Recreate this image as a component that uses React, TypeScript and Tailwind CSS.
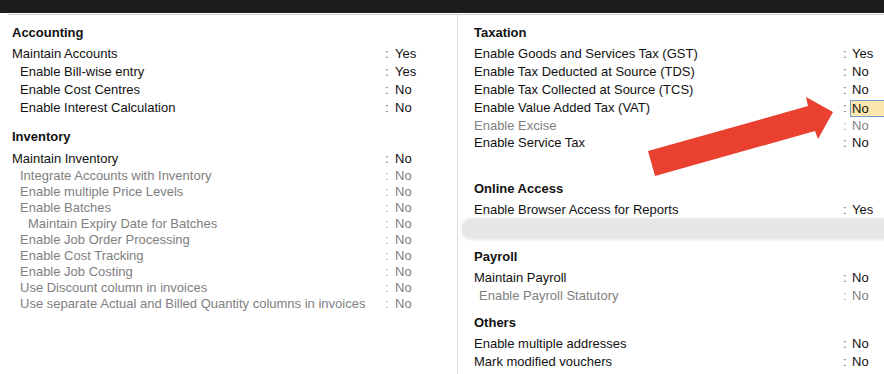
import React from "react";

type Row = { label: string; value: string; grey?: boolean; indent?: number; h?: number; hl?: boolean };

const leftAccounting: Row[] = [
  { label: "Maintain Accounts", value: "Yes" },
  { label: "Enable Bill-wise entry", value: "Yes", indent: 1 },
  { label: "Enable Cost Centres", value: "No", indent: 1 },
  { label: "Enable Interest Calculation", value: "No", indent: 1 },
];

const leftInventory: Row[] = [
  { label: "Maintain Inventory", value: "No", h: 17 },
  { label: "Integrate Accounts with Inventory", value: "No", grey: true, indent: 1, h: 16 },
  { label: "Enable multiple Price Levels", value: "No", grey: true, indent: 1, h: 16 },
  { label: "Enable Batches", value: "No", grey: true, indent: 1, h: 16 },
  { label: "Maintain Expiry Date for Batches", value: "No", grey: true, indent: 2, h: 16 },
  { label: "Enable Job Order Processing", value: "No", grey: true, indent: 1, h: 16 },
  { label: "Enable Cost Tracking", value: "No", grey: true, indent: 1, h: 16 },
  { label: "Enable Job Costing", value: "No", grey: true, indent: 1, h: 16 },
  { label: "Use Discount column in invoices", value: "No", grey: true, indent: 1, h: 16 },
  { label: "Use separate Actual and Billed Quantity columns in invoices", value: "No", grey: true, indent: 1, h: 16 },
];

const taxation: Row[] = [
  { label: "Enable Goods and Services Tax (GST)", value: "Yes" },
  { label: "Enable Tax Deducted at Source (TDS)", value: "No" },
  { label: "Enable Tax Collected at Source (TCS)", value: "No" },
  { label: "Enable Value Added Tax (VAT)", value: "No", hl: true },
  { label: "Enable Excise", value: "No", grey: true, h: 17 },
  { label: "Enable Service Tax", value: "No", h: 17 },
];

function Heading({ children, className = "" }: { children: React.ReactNode; className?: string }) {
  return <div className={"h-[18px] leading-[18px] font-bold text-[#111] " + className}>{children}</div>;
}

function LeftRow({ r }: { r: Row }) {
  const pad = r.indent === 2 ? "pl-[16px]" : r.indent === 1 ? "pl-[8px]" : "";
  const col = r.grey ? "text-[#808080]" : "text-[#111]";
  return (
    <div
      className={"grid grid-cols-[373px_10px_1fr] items-center " + col}
      style={{ height: (r.h ?? 18) + "px" }}
    >
      <div className={"whitespace-nowrap " + pad}>{r.label}</div>
      <div className={r.grey ? "text-[#aaa]" : "text-[#666]"}>:</div>
      <div>{r.value}</div>
    </div>
  );
}

function RightRow({ r }: { r: Row }) {
  const pad = r.indent === 1 ? "pl-[5px]" : "";
  const col = r.grey ? "text-[#808080]" : "text-[#111]";
  return (
    <div
      className={"grid grid-cols-[369px_9px_1fr] items-center " + col}
      style={{ height: (r.h ?? 18) + "px" }}
    >
      <div className={"whitespace-nowrap " + pad}>{r.label}</div>
      <div className={r.grey ? "text-[#aaa]" : "text-[#666]"}>:</div>
      {r.hl ? (
        <div className="ml-[-2px] mr-[-2px] h-[17px] border border-[#6f9fcb] bg-[#fde7ae] pl-[1px] leading-[15px]">
          {r.value}
        </div>
      ) : (
        <div>{r.value}</div>
      )}
    </div>
  );
}

export default function App() {
  return (
    <div
      className="relative h-[374px] w-[884px] overflow-hidden bg-white text-[13px] leading-[18px]"
      style={{ fontFamily: '"Liberation Sans", Arial, sans-serif' }}
    >
      <div className="h-[13px] bg-[#1d1d1d]" />
      <div className="ml-[8px] mt-[1px] flex h-[360px] border-t border-[#cfcfcf]">
        {/* Left column */}
        <div className="w-[450px] shrink-0 border-r border-[#d9d9d9] pl-[4px] pt-[9px]">
          <Heading>Accounting</Heading>
          <div className="mt-[3px]">
            {leftAccounting.map((r) => (
              <LeftRow key={r.label} r={r} />
            ))}
          </div>
          <Heading className="mt-[11px]">Inventory</Heading>
          <div className="mt-[4px]">
            {leftInventory.map((r) => (
              <LeftRow key={r.label} r={r} />
            ))}
          </div>
        </div>

        {/* Right column */}
        <div className="flex-1 pl-[16px] pt-[9px]">
          <Heading>Taxation</Heading>
          <div className="mt-[3px]">
            {taxation.map((r) => (
              <RightRow key={r.label} r={r} />
            ))}
          </div>
          <Heading className="mt-[29px]">Online Access</Heading>
          <div className="mt-[3px]">
            <RightRow r={{ label: "Enable Browser Access for Reports", value: "Yes" }} />
          </div>
          <Heading className="mt-[29px]">Payroll</Heading>
          <div className="mt-[3px]">
            <RightRow r={{ label: "Maintain Payroll", value: "No" }} />
            <RightRow r={{ label: "Enable Payroll Statutory", value: "No", grey: true, indent: 1, h: 17 }} />
          </div>
          <Heading className="mt-[10px]">Others</Heading>
          <div className="mt-[3px]">
            <RightRow r={{ label: "Enable multiple addresses", value: "No" }} />
            <RightRow r={{ label: "Mark modified vouchers", value: "No" }} />
          </div>
        </div>
      </div>

      {/* Redaction smudge */}
      <div className="pointer-events-none absolute left-[461px] top-[218px] h-[22px] w-[440px] rounded-full bg-[#e7e7e7] blur-[1px]" />

      {/* Red arrow annotation */}
      <svg className="pointer-events-none absolute left-0 top-0" width="884" height="374" viewBox="0 0 884 374">
        <polygon
          points="648,151 808,106 806,97 833,112 818,139 815,131 655,176"
          fill="#e9402f"
        />
      </svg>
    </div>
  );
}
